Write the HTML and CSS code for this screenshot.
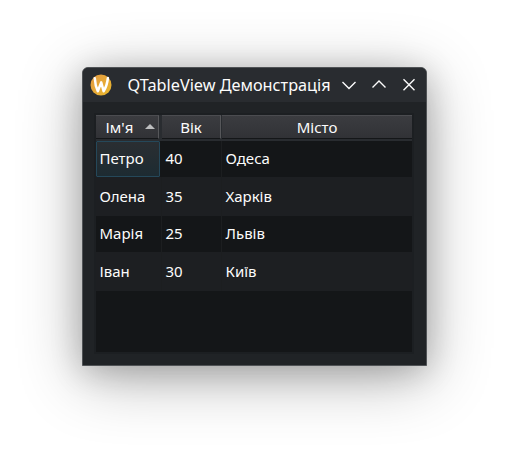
FILE: index.html
```html
<!DOCTYPE html>
<html lang="uk">
<head>
<meta charset="utf-8">
<title>QTableView Демонстрація</title>
<link rel="stylesheet" href="styles.css">
</head>
<body>
<main class="window">
  <header class="titlebar">
    <svg class="logo" viewBox="0 0 22 22" width="22" height="22">
      <defs><linearGradient id="gold" x1="0" y1="0" x2="1" y2="1"><stop offset="0" stop-color="#e49a42"/><stop offset="1" stop-color="#e8b72c"/></linearGradient></defs>
      <circle cx="11" cy="11" r="10.5" fill="url(#gold)"/>
      <path d="M4.8 4.3 Q5.2 12 7.8 17.2 L11.2 8.4 L13.6 17.2 Q17 12 17.9 4" fill="none" stroke="#fff" stroke-width="2.5" stroke-linecap="round" stroke-linejoin="round"/>
    </svg>
    <h1 class="title">QTableView Демонстрація</h1>
    <div class="buttons">
      <svg viewBox="0 0 18 18" width="18" height="18"><path d="M2.5 6 L9 12.5 L15.5 6"/></svg>
      <svg viewBox="0 0 18 18" width="18" height="18"><path d="M2.5 11.5 L9 5 L15.5 11.5"/></svg>
      <svg viewBox="0 0 18 18" width="18" height="18"><path d="M3.5 3.2 L14.5 14.2 M14.5 3.2 L3.5 14.2"/></svg>
    </div>
  </header>
  <section class="table">
    <div class="head">
      <div class="th sorted"><span>Ім'я</span><svg class="sort" viewBox="0 0 10 5" width="10" height="5"><path d="M0 5 L5 0 L10 5Z"/></svg></div>
      <div class="th age">Вік</div>
      <div class="th city">Місто</div>
    </div>
    <div class="row"><div class="td current">Петро</div><div class="td">40</div><div class="td">Одеса</div></div>
    <div class="row alt"><div class="td">Олена</div><div class="td">35</div><div class="td">Харків</div></div>
    <div class="row"><div class="td">Марія</div><div class="td">25</div><div class="td">Львів</div></div>
    <div class="row alt"><div class="td">Іван</div><div class="td">30</div><div class="td">Київ</div></div>
  </section>
</main>
</body>
</html>
```
FILE: styles.css
```css
* { box-sizing: border-box; }
body {
  margin: 0;
  height: 462px;
  padding: 67px 81px 0 82px;
  overflow: hidden;
  background: #fff;
  color: #fcfcfc;
  font: 15px/20px "Noto Sans", sans-serif;
}
.window {
  width: 345px;
  height: 299px;
  border: 1px solid #505356;
  border-radius: 6px 6px 0 0;
  background: #202326;
  box-shadow: 0 12px 64px rgba(0, 0, 0, .3), 0 5px 32px rgba(0, 0, 0, .2);
}
.titlebar {
  display: flex;
  align-items: center;
  height: 34px;
  padding: 0 8px 0 6.5px;
  border-radius: 5px 5px 0 0;
  background: #292c30;
}
.logo { margin-bottom: 1px; }
.title {
  width: 204px;
  margin: 0 0 0 16px;
  font-size: 16.25px;
  font-weight: 400;
  line-height: 22px;
  white-space: nowrap;
}
.buttons {
  display: flex;
  gap: 12px;
  margin-left: auto;
}
.buttons svg { fill: none; stroke: #fcfcfc; stroke-width: 1.4; }
.table {
  width: 320px;
  height: 241px;
  margin: 11px 0 0 11px;
  border: 2px solid #1c1f22;
  background: #141618;
}
.head, .row {
  display: grid;
  grid-template-columns: 66px 60px 190px;
}
.head {
  height: 26px;
  background: #292c30;
}
.th {
  height: 24px;
  border-top: 1px solid #4b4c50;
  border-bottom: 1px solid #141618;
  background: linear-gradient(#3b3c40, #313236);
  text-align: center;
  line-height: 23px;
}
.sorted {
  display: flex;
  width: 63px;
  padding-left: 9.5px;
  border-right: 1px solid #56575a;
}
.sort {
  margin: 8px 3px 0 auto;
  fill: #bdbebf;
}
.age { width: 59px; border-right: 1px solid #56575a; }
.row { height: 36px; }
.alt { height: 39px; background: #1d1f22; }
.td {
  padding-left: 3.5px;
  border-right: 1px solid #1c1e20;
  line-height: 35px;
}
.td:last-child { border-right: 0; }
.alt .td { line-height: 38px; }
.current {
  width: 64px;
  padding-left: 2.5px;
  border: 1px solid #25485a;
  border-radius: 1px;
  background: linear-gradient(#2a2e32, #1d2b32);
  line-height: 33px;
}
```
